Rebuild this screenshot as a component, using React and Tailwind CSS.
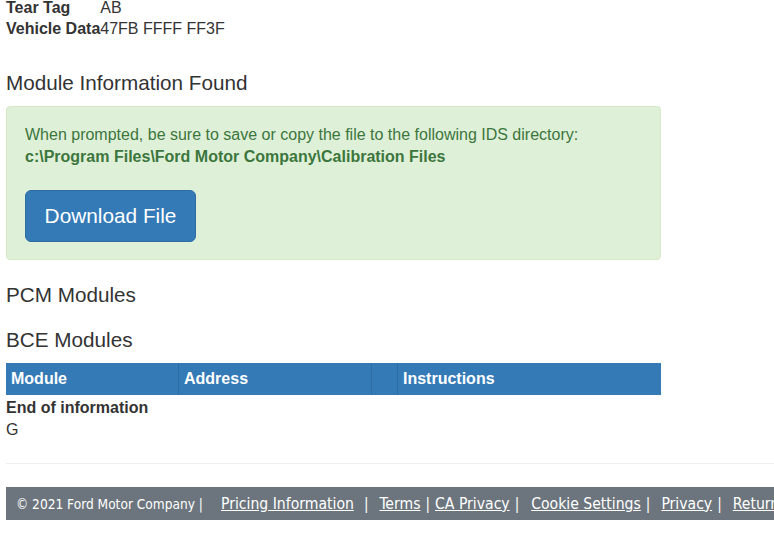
import React from 'react';

export default function App() {
  return (
    <div className="w-[774px] h-[543px] overflow-hidden bg-white text-[#333] text-[16px] font-['Liberation_Sans',Arial,sans-serif]">
      <div className="pl-[6px]">
        {/* vehicle info */}
        <table className="-mt-[3px] border-collapse leading-[21px]">
          <tbody>
            <tr>
              <td className="font-bold p-0">Tear Tag</td>
              <td className="p-0">AB</td>
            </tr>
            <tr>
              <td className="font-bold p-0">Vehicle Data</td>
              <td className="p-0">47FB FFFF FF3F</td>
            </tr>
          </tbody>
        </table>

        <h4 className="mt-[33px] text-[20.7px] leading-[22px]">Module Information Found</h4>

        {/* alert */}
        <div className="mt-[12px] w-[655px] rounded-[4px] border border-[#d6e9c6] bg-[#dff0d8] text-[#3c763d] pl-[18px] pt-[17px] pb-[17px] leading-[22px]">
          <div>When prompted, be sure to save or copy the file to the following IDS directory:</div>
          <div className="font-bold">c:\Program Files\Ford Motor Company\Calibration Files</div>
          <button className="mt-[22px] h-[52px] w-[171px] rounded-[6px] border border-[#2e6da4] bg-[#337ab7] text-white text-[20.8px]">
            Download File
          </button>
        </div>

        <h4 className="mt-[24px] text-[20.7px] leading-[22px]">PCM Modules</h4>
        <h4 className="mt-[23px] text-[20.7px] leading-[22px]">BCE Modules</h4>

        {/* modules table */}
        <div className="mt-[12px] w-[655px] h-[32px] grid grid-cols-[172px_193px_26px_1fr] bg-[#337ab7] text-white font-bold">
          <div className="pl-[5px] flex items-center">Module</div>
          <div className="pl-[5px] flex items-center border-l border-[#2e6da4]">Address</div>
          <div className="border-l border-[#2e6da4]"></div>
          <div className="pl-[5px] flex items-center border-l border-[#2e6da4]">Instructions</div>
        </div>
        <div className="mt-[2px] font-bold leading-[22px]">End of information</div>
        <div className="leading-[22px]">G</div>

        <hr className="mt-[22px] border-t border-[#eee]" />

        {/* footer */}
        <div className="mt-[23px] h-[33px] bg-[#6c757d] text-white font-['DejaVu_Sans_Condensed','DejaVu_Sans',sans-serif] flex items-center pl-[10px] pt-[2px] whitespace-nowrap">
          <span className="text-[13.6px]">© 2021 Ford Motor Company |</span>
          <a className="underline text-[15.6px] ml-[18px]">Pricing Information</a>
          <span className="text-[15px] ml-[10px] mr-[11px]">|</span>
          <a className="underline text-[15.6px]">Terms</a>
          <span className="text-[15px] mx-[5px]">|</span>
          <a className="underline text-[15.6px]">CA Privacy</a>
          <span className="text-[15px] ml-[5px] mr-[12px]">|</span>
          <a className="underline text-[15.6px]">Cookie Settings</a>
          <span className="text-[15px] ml-[5px] mr-[11px]">|</span>
          <a className="underline text-[15.6px]">Privacy</a>
          <span className="text-[15px] ml-[5px] mr-[11px]">|</span>
          <a className="underline text-[15.6px]">Return to Home</a>
        </div>
      </div>
    </div>
  );
}
